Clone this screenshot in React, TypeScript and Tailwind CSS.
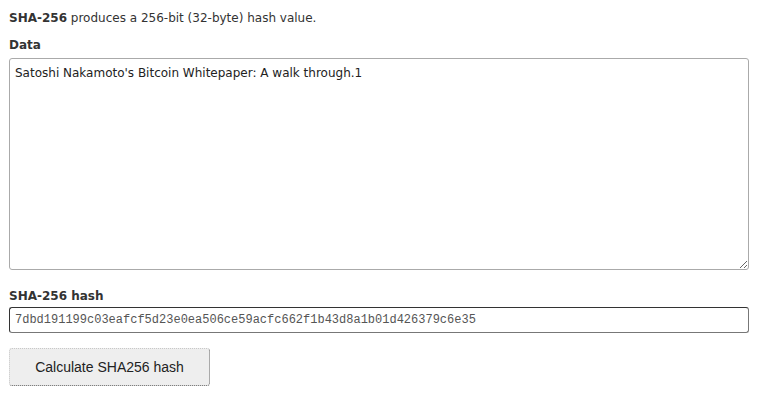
export default function App() {
  return (
    <div className="min-h-[403px] bg-white px-[9px] pt-[9px] text-[12px] text-[#333] font-['DejaVu_Sans',Verdana,sans-serif]">
      <p className="leading-[18px]">
        <b>SHA-256</b> produces a 256-bit (32-byte) hash value.
      </p>

      <label className="block mt-[9px] mb-[4px] font-bold text-[12px] leading-[18px]">Data</label>
      <textarea
        className="block w-[740px] h-[212px] resize-y rounded-[3px] border border-[#aaa] px-[5px] py-[5px] text-[12px] leading-[18px] text-[#222] outline-none font-['DejaVu_Sans',Verdana,sans-serif]"
        defaultValue="Satoshi Nakamoto's Bitcoin Whitepaper: A walk through.1"
      />

      <label className="block mt-[17px] mb-[2px] font-bold text-[12px] leading-[18px]">SHA-256 hash</label>
      <input
        readOnly
        className="block w-[740px] h-[26px] rounded-[3px] border border-[#333] border-r-[#777] border-b-[#777] px-[5px] text-[12px] text-[#555] outline-none font-['Liberation_Mono','Courier_New',monospace]"
        value="7dbd191199c03eafcf5d23e0ea506ce59acfc662f1b43d8a1b01d426379c6e35"
      />

      <button className="mt-[15px] flex h-[38px] w-[201px] items-center justify-center rounded-[3px] border border-dotted border-[#c8c8c8] border-r-[#666] border-b-[#666] bg-[#eee] text-[14px] text-[#222] font-['Liberation_Sans',Arial,sans-serif]">
        Calculate SHA256 hash
      </button>
    </div>
  );
}
